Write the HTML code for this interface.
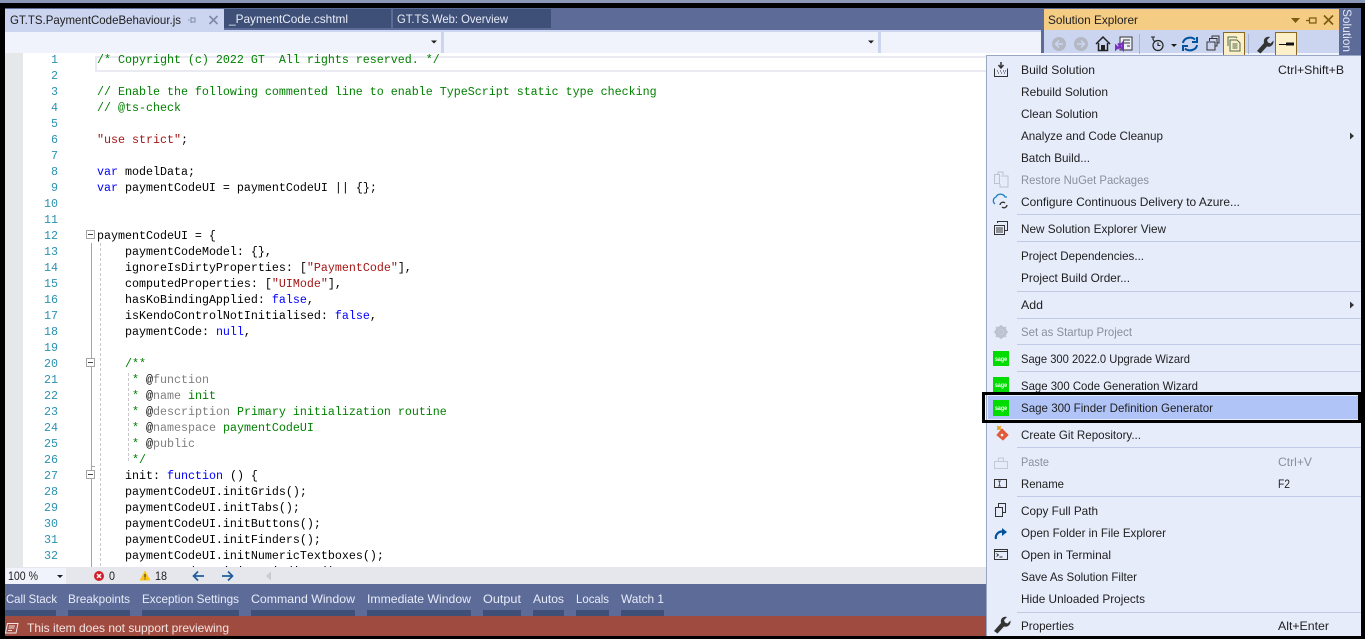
<!DOCTYPE html>
<html>
<head>
<meta charset="utf-8">
<title>Visual Studio</title>
<style>
html,body{margin:0;padding:0;width:1365px;height:639px;overflow:hidden;background:#000}
svg{display:block}
.c text,text.c{font-family:"Liberation Mono",monospace;font-size:11.67px;white-space:pre;fill:#000}
.n text{font-family:"Liberation Mono",monospace;font-size:11.67px;fill:#2b91af;text-anchor:end}
.u text,text.u{font-family:"Liberation Sans",sans-serif;font-size:12px;fill:#1e1e1e}
.t text{fill:#e8ecf8}
.g{fill:#8a8f9c !important}
.k{fill:#0000ff}.s{fill:#a31515}.m{fill:#008000}.d{fill:#808080}.b{fill:#000}
</style>
</head>
<body>
<svg width="1365" height="639" viewBox="0 0 1365 639" xmlns="http://www.w3.org/2000/svg">
<rect width="1365" height="639" fill="#000"/>
<rect width="1365" height="3" fill="#8c98b8"/>
<rect x="5" y="8" width="1356" height="576" fill="#5d6b99"/>

<!-- document tabs -->
<rect x="5" y="9" width="219" height="23" fill="#ccd5f0"/>
<rect x="224" y="9" width="167" height="19" fill="#3f5078"/>
<rect x="393" y="9" width="158" height="19" fill="#3f5078"/>
<rect x="5" y="30" width="1036" height="2" fill="#ccd5f0"/>
<g class="u">
<text x="10" y="24" textLength="171" lengthAdjust="spacingAndGlyphs">GT.TS.PaymentCodeBehaviour.js</text>
</g>
<g class="u t">
<text x="229" y="23" textLength="119" lengthAdjust="spacingAndGlyphs">_PaymentCode.cshtml</text>
<text x="397" y="23" textLength="111" lengthAdjust="spacingAndGlyphs">GT.TS.Web: Overview</text>
</g>
<path d="M191 17v6M188 20h1.500M191.500 18h3.500v4h-3.500" fill="none" stroke="#7d8aa8" stroke-width="1"/>
<path d="M209.500 16l8 8M217.500 16l-8 8" stroke="#7d8aa8" stroke-width="1.600" fill="none"/>

<!-- nav combos -->
<rect x="5" y="32" width="1036" height="21" fill="#f0f3fb"/>
<rect x="441" y="32" width="3" height="21" fill="#ccd5f0"/>
<rect x="878" y="32" width="3" height="21" fill="#ccd5f0"/>
<path d="M431 40.500h6l-3 3z" fill="#1e1e1e"/>
<path d="M868 40.500h6l-3 3z" fill="#1e1e1e"/>

<!-- editor -->
<rect x="5" y="53" width="1036" height="514" fill="#fff"/>
<rect x="5" y="53" width="18" height="514" fill="#e6e7e8"/>
<rect x="96" y="57" width="945" height="14" fill="none" stroke="#eaeaf2" stroke-width="2"/>

<!-- folding guides -->
<path d="M91.500 243V567" stroke="#a5a5a5" stroke-width="1"/>
<path d="M91.500 466.500H95" stroke="#a5a5a5" stroke-width="1"/>
<path d="M100.500 243V567" stroke="#c8c8c8" stroke-width="1" stroke-dasharray="3 2"/>
<path d="M128.500 373V461" stroke="#c8c8c8" stroke-width="1" stroke-dasharray="3 2"/>
<g fill="#fff" stroke="#a5a5a5">
<rect x="86.500" y="230.500" width="8" height="8"/>
<rect x="86.500" y="358.500" width="8" height="8"/>
<rect x="86.500" y="470.500" width="8" height="8"/>
</g>
<path d="M88 234.500h5M88 362.500h5M88 474.500h5" stroke="#444" stroke-width="1"/>

<g class="n">
<text x="58" y="63">1</text><text x="58" y="79">2</text><text x="58" y="95">3</text><text x="58" y="111">4</text>
<text x="58" y="127">5</text><text x="58" y="143">6</text><text x="58" y="159">7</text><text x="58" y="175">8</text>
<text x="58" y="191">9</text><text x="58" y="207">10</text><text x="58" y="223">11</text><text x="58" y="239">12</text>
<text x="58" y="255">13</text><text x="58" y="271">14</text><text x="58" y="287">15</text><text x="58" y="303">16</text>
<text x="58" y="319">17</text><text x="58" y="335">18</text><text x="58" y="351">19</text><text x="58" y="367">20</text>
<text x="58" y="383">21</text><text x="58" y="399">22</text><text x="58" y="415">23</text><text x="58" y="431">24</text>
<text x="58" y="447">25</text><text x="58" y="463">26</text><text x="58" y="479">27</text><text x="58" y="495">28</text>
<text x="58" y="511">29</text><text x="58" y="527">30</text><text x="58" y="543">31</text><text x="58" y="559">32</text>
</g>

<g class="c">
<text x="97" y="63" class="m" style="fill:#008000">/* Copyright (c) 2022 GT  All rights reserved. */</text>
<text x="97" y="95" style="fill:#008000">// Enable the following commented line to enable TypeScript static type checking</text>
<text x="97" y="111" style="fill:#008000">// @ts-check</text>
<text x="97" y="143"><tspan class="s">"use strict"</tspan>;</text>
<text x="97" y="175"><tspan class="k">var</tspan> modelData;</text>
<text x="97" y="191"><tspan class="k">var</tspan> paymentCodeUI = paymentCodeUI || {};</text>
<text x="97" y="239">paymentCodeUI = {</text>
<text x="125" y="255">paymentCodeModel: {},</text>
<text x="125" y="271">ignoreIsDirtyProperties: [<tspan class="s">"PaymentCode"</tspan>],</text>
<text x="125" y="287">computedProperties: [<tspan class="s">"UIMode"</tspan>],</text>
<text x="125" y="303">hasKoBindingApplied: <tspan class="k">false</tspan>,</text>
<text x="125" y="319">isKendoControlNotInitialised: <tspan class="k">false</tspan>,</text>
<text x="125" y="335">paymentCode: <tspan class="k">null</tspan>,</text>
<text x="125" y="367" style="fill:#008000">/**</text>
<text x="125" y="383" style="fill:#008000"> * <tspan class="b">@</tspan><tspan class="d">function</tspan></text>
<text x="125" y="399" style="fill:#008000"> * <tspan class="b">@</tspan><tspan class="d">name</tspan> init</text>
<text x="125" y="415" style="fill:#008000"> * <tspan class="b">@</tspan><tspan class="d">description</tspan> Primary initialization routine</text>
<text x="125" y="431" style="fill:#008000"> * <tspan class="b">@</tspan><tspan class="d">namespace</tspan> paymentCodeUI</text>
<text x="125" y="447" style="fill:#008000"> * <tspan class="b">@</tspan><tspan class="d">public</tspan></text>
<text x="125" y="463" style="fill:#008000"> */</text>
<text x="125" y="479">init: <tspan class="k">function</tspan> () {</text>
<text x="125" y="495">paymentCodeUI.initGrids();</text>
<text x="125" y="511">paymentCodeUI.initTabs();</text>
<text x="125" y="527">paymentCodeUI.initButtons();</text>
<text x="125" y="543">paymentCodeUI.initFinders();</text>
<text x="125" y="559">paymentCodeUI.initNumericTextboxes();</text>
<text x="125" y="575">paymentCodeUI.initKoBindings();</text>
</g>

<!-- editor status strip -->
<rect x="5" y="567" width="1036" height="17" fill="#e6e7ec"/>
<rect x="6" y="568" width="60" height="16" fill="#f0f3fb"/>
<g class="u">
<text x="8" y="580" textLength="30" lengthAdjust="spacingAndGlyphs">100 %</text>
<text x="109" y="580" textLength="6" lengthAdjust="spacingAndGlyphs">0</text>
<text x="155" y="580" textLength="12" lengthAdjust="spacingAndGlyphs">18</text>
</g>
<path d="M57 575h6l-3 3z" fill="#1e1e1e"/>
<circle cx="99" cy="576" r="5" fill="#d0202a"/>
<path d="M97 574l4 4M101 574l-4 4" stroke="#fff" stroke-width="1.400"/>
<path d="M145 570.500l5.500 10h-11z" fill="#fcc419"/>
<path d="M145 574v3.500M145 578.500v1" stroke="#222" stroke-width="1"/>
<path d="M204 576h-10M198 571.500l-4.500 4.500 4.500 4.500" fill="none" stroke="#1f5c9c" stroke-width="1.700"/>
<path d="M222 576h10M228 571.500l4.500 4.500-4.500 4.500" fill="none" stroke="#1f5c9c" stroke-width="1.700"/>
<path d="M266 576l5-4.500v9z" fill="#c9c9cf"/>

<!-- tool window tabs -->
<rect x="5" y="584" width="1356" height="32" fill="#5d6b99"/>
<g fill="#3f5078">
<rect x="5" y="610" width="51" height="6"/>
<rect x="68" y="610" width="62" height="6"/>
<rect x="142" y="610" width="97" height="6"/>
<rect x="251" y="610" width="104" height="6"/>
<rect x="367" y="610" width="104" height="6"/>
<rect x="483" y="610" width="38" height="6"/>
<rect x="533" y="610" width="31" height="6"/>
<rect x="576" y="610" width="33" height="6"/>
<rect x="621" y="610" width="43" height="6"/>
</g>
<g class="u t">
<text x="6" y="603" textLength="51" lengthAdjust="spacingAndGlyphs">Call Stack</text>
<text x="68" y="603" textLength="62" lengthAdjust="spacingAndGlyphs">Breakpoints</text>
<text x="142" y="603" textLength="97" lengthAdjust="spacingAndGlyphs">Exception Settings</text>
<text x="251" y="603" textLength="104" lengthAdjust="spacingAndGlyphs">Command Window</text>
<text x="367" y="603" textLength="104" lengthAdjust="spacingAndGlyphs">Immediate Window</text>
<text x="483" y="603" textLength="38" lengthAdjust="spacingAndGlyphs">Output</text>
<text x="533" y="603" textLength="31" lengthAdjust="spacingAndGlyphs">Autos</text>
<text x="576" y="603" textLength="33" lengthAdjust="spacingAndGlyphs">Locals</text>
<text x="621" y="603" textLength="43" lengthAdjust="spacingAndGlyphs">Watch 1</text>
</g>

<!-- status bar -->
<rect x="5" y="616" width="1356" height="20" fill="#a04b40"/>
<path d="M7.500 623.500h10.500l-2 9.500h-10.500zM9 626h6M8.500 628h6M8 630.500h4" fill="none" stroke="#f4e8e6" stroke-width="1"/>
<g class="u t"><text x="27" y="632" textLength="202" lengthAdjust="spacingAndGlyphs" style="fill:#f3e4e1">This item does not support previewing</text></g>

<!-- solution explorer header -->
<rect x="1044" y="9" width="295" height="21" fill="#f5cc84"/>
<rect x="1044" y="30" width="295" height="26" fill="#ccd5f0"/>
<rect x="1041" y="53" width="320" height="3" fill="#f0f3fb"/>
<g class="u"><text x="1048" y="24" textLength="90" lengthAdjust="spacingAndGlyphs">Solution Explorer</text></g>
<path d="M1291 18h9l-4.500 5z" fill="#7a5a10"/>
<path d="M1306 20.500h3M1309.500 17.500v6M1309.500 18h6.500v5h-6.500" fill="none" stroke="#7a5a10" stroke-width="1.200"/>
<path d="M1324 15.500l9 9M1333 15.500l-9 9" stroke="#7a5a10" stroke-width="1.600" fill="none"/>

<!-- vertical tab -->
<rect x="1339" y="8" width="22" height="47" fill="#5d6b99"/>
<text class="u" transform="translate(1343 9) rotate(90)" textLength="43" lengthAdjust="spacingAndGlyphs" style="fill:#e2e7f6">Solution</text>

<!-- toolbar icons -->
<circle cx="1059" cy="44" r="7" fill="#b3b8c4"/>
<path d="M1063 44h-7M1059 40.500l-3.500 3.500 3.500 3.500" fill="none" stroke="#ccd5f0" stroke-width="1.500"/>
<circle cx="1081" cy="44" r="7" fill="#b3b8c4"/>
<path d="M1077 44h7M1081 40.500l3.500 3.500-3.500 3.500" fill="none" stroke="#ccd5f0" stroke-width="1.500"/>
<path d="M1096 44l7-7 7 7M1098.500 43v7.500h9V43" fill="none" stroke="#222" stroke-width="1.500"/>
<rect x="1101" y="45" width="4" height="6" fill="#222"/>
<rect x="1120" y="37" width="12" height="13" fill="#eef1fa" stroke="#333"/>
<path d="M1123 40h7M1123 43h7M1127 46h3" stroke="#333"/>
<path d="M1118 43.500l5 6v-7l-5 5.500-2-2v3l2-2" fill="none" stroke="#7b2fc2" stroke-width="2"/>
<rect x="1139" y="34" width="1" height="20" fill="#a6b2d1"/>
<circle cx="1158" cy="45.500" r="5" fill="none" stroke="#222" stroke-width="1.200"/>
<path d="M1158 42.500v3h2.500M1151 37h4M1153 37v2.500l1.500 2" fill="none" stroke="#222" stroke-width="1.100"/>
<path d="M1171 44h6l-3 3z" fill="#1e1e1e"/>
<path d="M1183 43a7 6 0 0 1 12-3.500M1197 37v5h-5M1197 45a7 6 0 0 1-12 3.500M1183 51v-5h5" fill="none" stroke="#00539c" stroke-width="2"/>
<rect x="1207" y="42" width="8" height="8" fill="none" stroke="#333"/>
<path d="M1209.500 41v-2.500h7.500v7.500h-1.500M1212 38v-2h7v7h-1.500" fill="none" stroke="#333"/>
<rect x="1223.500" y="32.500" width="21" height="23" fill="#fdefc8" stroke="#8a6a20"/>
<path d="M1228 46v-9h8l1 1M1230 48v-8h7l3 3v8h-10z" fill="none" stroke="#4c6b50" stroke-width="1"/>
<path d="M1232.500 44h5M1232.500 46h5M1232.500 48h5" stroke="#4c6b50"/>
<rect x="1248" y="34" width="1" height="20" fill="#a6b2d1"/>
<path d="M1257 51l7-8c-1-4 2-7 6-6l-3 3 1 2.500 2.500 1 3-3c.5 4-2.500 7-6.500 6l-6.500 7z" fill="#333"/>
<rect x="1275.500" y="32.500" width="21" height="23" fill="#fdefc8" stroke="#8a6a20"/>
<rect x="1279" y="44" width="8" height="1" fill="#111"/>
<rect x="1286" y="42.500" width="8" height="3" fill="#111"/>

<!-- context menu -->
<rect x="986.500" y="55.500" width="375" height="581" fill="#e7ecfb" stroke="#9aa7c4"/>
<rect x="1361" y="0" width="4" height="639" fill="#000"/>
<rect x="1361" y="0" width="4" height="3" fill="#8c98b8"/>
<rect x="986" y="636" width="379" height="3" fill="#000"/>

<!-- separators -->
<g fill="#c2cbe6">
<rect x="1017" y="214" width="344" height="1"/>
<rect x="1017" y="241" width="344" height="1"/>
<rect x="1017" y="291" width="344" height="1"/>
<rect x="1017" y="318" width="344" height="1"/>
<rect x="1017" y="344" width="344" height="1"/>
<rect x="1017" y="371" width="344" height="1"/>
<rect x="1017" y="447" width="344" height="1"/>
<rect x="1017" y="496" width="344" height="1"/>
<rect x="1017" y="612" width="344" height="1"/>
</g>

<!-- hover + annotation box -->
<rect x="988" y="396" width="370" height="23" fill="#b0c4f7"/>

<!-- menu text -->
<g class="u">
<text x="1021" y="74" textLength="74" lengthAdjust="spacingAndGlyphs">Build Solution</text>
<text x="1021" y="96" textLength="87" lengthAdjust="spacingAndGlyphs">Rebuild Solution</text>
<text x="1021" y="118" textLength="77" lengthAdjust="spacingAndGlyphs">Clean Solution</text>
<text x="1021" y="140" textLength="142" lengthAdjust="spacingAndGlyphs">Analyze and Code Cleanup</text>
<text x="1021" y="162" textLength="69" lengthAdjust="spacingAndGlyphs">Batch Build...</text>
<text x="1021" y="184" textLength="128" lengthAdjust="spacingAndGlyphs" class="g">Restore NuGet Packages</text>
<text x="1021" y="206" textLength="219" lengthAdjust="spacingAndGlyphs">Configure Continuous Delivery to Azure...</text>
<text x="1021" y="233" textLength="145" lengthAdjust="spacingAndGlyphs">New Solution Explorer View</text>
<text x="1021" y="260" textLength="123" lengthAdjust="spacingAndGlyphs">Project Dependencies...</text>
<text x="1021" y="282" textLength="109" lengthAdjust="spacingAndGlyphs">Project Build Order...</text>
<text x="1021" y="309" textLength="22" lengthAdjust="spacingAndGlyphs">Add</text>
<text x="1021" y="336" textLength="111" lengthAdjust="spacingAndGlyphs" class="g">Set as Startup Project</text>
<text x="1021" y="363" textLength="169" lengthAdjust="spacingAndGlyphs">Sage 300 2022.0 Upgrade Wizard</text>
<text x="1021" y="390" textLength="177" lengthAdjust="spacingAndGlyphs">Sage 300 Code Generation Wizard</text>
<text x="1021" y="412" textLength="192" lengthAdjust="spacingAndGlyphs">Sage 300 Finder Definition Generator</text>
<text x="1021" y="439" textLength="120" lengthAdjust="spacingAndGlyphs">Create Git Repository...</text>
<text x="1021" y="466" textLength="28" lengthAdjust="spacingAndGlyphs" class="g">Paste</text>
<text x="1021" y="488" textLength="43" lengthAdjust="spacingAndGlyphs">Rename</text>
<text x="1021" y="515" textLength="77" lengthAdjust="spacingAndGlyphs">Copy Full Path</text>
<text x="1021" y="537" textLength="145" lengthAdjust="spacingAndGlyphs">Open Folder in File Explorer</text>
<text x="1021" y="559" textLength="90" lengthAdjust="spacingAndGlyphs">Open in Terminal</text>
<text x="1021" y="581" textLength="116" lengthAdjust="spacingAndGlyphs">Save As Solution Filter</text>
<text x="1021" y="603" textLength="124" lengthAdjust="spacingAndGlyphs">Hide Unloaded Projects</text>
<text x="1021" y="630" textLength="53" lengthAdjust="spacingAndGlyphs">Properties</text>
<text x="1278" y="74" textLength="66" lengthAdjust="spacingAndGlyphs">Ctrl+Shift+B</text>
<text x="1278" y="466" textLength="34" lengthAdjust="spacingAndGlyphs" class="g">Ctrl+V</text>
<text x="1278" y="488" textLength="12" lengthAdjust="spacingAndGlyphs">F2</text>
<text x="1278" y="630" textLength="51" lengthAdjust="spacingAndGlyphs">Alt+Enter</text>
</g>
<path d="M1350 132.500l4 3.500-4 3.500z" fill="#333"/>
<path d="M1350 301.500l4 3.500-4 3.500z" fill="#333"/>

<!-- menu icons -->
<path d="M1001 62v5M998.500 65l2.500 3 2.500-3" fill="none" stroke="#333" stroke-width="1.500"/>
<path d="M994.500 68.500v8h13v-8" fill="none" stroke="#333"/>
<path d="M997 71h1M1000 71h1M1003 71h1M1005 71h1M998 73h1M1001 73h1M1004 73h1" stroke="#333"/>
<path d="M994.500 174.500h5v9h-5zM1001 176h7v11h-8v-3M998 174v-2h5v3" fill="none" stroke="#bcc2cf"/>
<path d="M995 204a4 4 0 0 1 1-7 5 5 0 0 1 9 0h2" fill="none" stroke="#1f7fc4" stroke-width="1.300"/>
<path d="M1000 205a3 3 0 0 1 5-2M1007 205a3 3 0 0 1-5 2" fill="none" stroke="#333" stroke-width="1.300"/>
<rect x="994.500" y="225.500" width="10" height="9" fill="none" stroke="#333"/>
<path d="M997.500 223v-1.500h10v9H1005" fill="none" stroke="#333"/>
<path d="M996 228h7M996 230h7M996 232h7" stroke="#333"/>
<circle cx="1001" cy="332" r="4.500" fill="none" stroke="#bcc2cf" stroke-width="3"/>
<path d="M1001 325v14M994 332h14M996 327l10 10M1006 327l-10 10" stroke="#bcc2cf" stroke-width="1.500"/>

<g fill="#00dc00">
<rect x="993" y="351" width="16" height="15"/>
<rect x="993" y="377" width="16" height="15"/>
<rect x="993" y="400" width="16" height="16"/>
</g>
<g font-family="'Liberation Sans',sans-serif" font-weight="bold" font-size="6" fill="#fff">
<text x="995" y="361" textLength="12" lengthAdjust="spacingAndGlyphs">sage</text>
<text x="995" y="387" textLength="12" lengthAdjust="spacingAndGlyphs">sage</text>
<text x="995" y="410" textLength="12" lengthAdjust="spacingAndGlyphs">sage</text>
</g>

<path d="M1002 429l6 6-5 5-6-5z" fill="#e2593b" stroke="#e2593b"/>
<circle cx="1002" cy="435" r="1.300" fill="#fff"/>
<path d="M997 428h4M999 426v4M997 426l4 4M1001 426l-4 4" stroke="#e8a020" stroke-width="1"/>
<path d="M994.500 461.500h13v7h-13zM998.500 461.500v-3.500h5v3.500M994.500 461.500v7" fill="none" stroke="#c3c9d6"/>
<rect x="994.500" y="479.500" width="12" height="8" fill="none" stroke="#333"/>
<path d="M998 481h3M999.500 481v5M998 486h3" stroke="#333" stroke-width=".8"/>
<rect x="995.500" y="507.500" width="7" height="9" fill="none" stroke="#333"/>
<path d="M998.500 507v-3.500h7v9h-3" fill="none" stroke="#333"/>
<path d="M996 539a6 6 0 0 1 8-7" fill="none" stroke="#00539c" stroke-width="2.200"/>
<path d="M1002 528l5 4-5 4z" fill="#00539c"/>
<rect x="994.500" y="549.500" width="13" height="10" fill="none" stroke="#333"/>
<path d="M994.500 551.500h13" stroke="#333"/>
<path d="M996.500 553.500l2 1.500-2 1.500M999.500 557h3" fill="none" stroke="#333" stroke-width=".9"/>
<path d="M994 631l7-8c-1-4 2-7 6-6l-3 3 1 2.500 2.500 1 3-3c.5 4-2.500 7-6.500 6l-6.500 7z" fill="#333"/>

<!-- annotation box -->
<rect x="983.500" y="393.500" width="376" height="28" fill="none" stroke="#000" stroke-width="3"/>
</svg>
</body>
</html>
